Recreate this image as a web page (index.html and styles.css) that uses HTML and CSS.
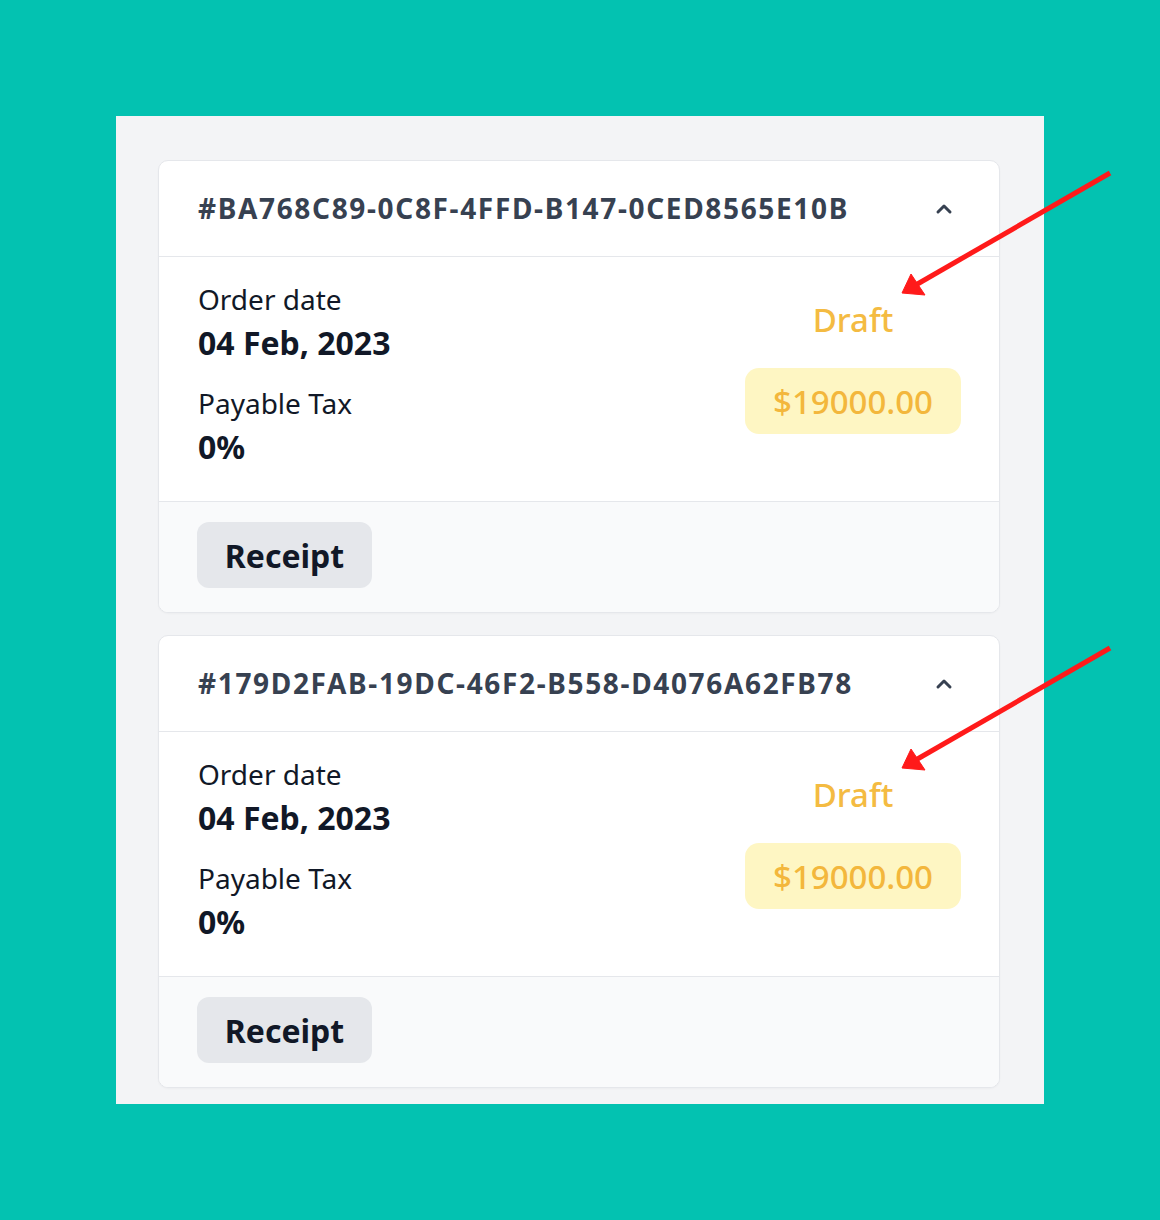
FILE: index.html
```html
<!DOCTYPE html>
<html lang="en">
<head>
<meta charset="utf-8">
<title>Orders</title>
<link rel="stylesheet" href="styles.css">
</head>
<body>
<div class="stage">
  <div class="panel">
    <div class="card">
      <div class="card-header">
        <span class="order-id">#BA768C89-0C8F-4FFD-B147-0CED8565E10B</span>
        <svg class="chevron" width="18" height="14" viewBox="0 0 18 14"><polyline points="3,11 9,5 15,11" fill="none" stroke="#374151" stroke-width="3" stroke-linecap="round" stroke-linejoin="round"/></svg>
      </div>
      <div class="card-body">
        <div class="info">
          <div class="label">Order date</div>
          <div class="value">04 Feb, 2023</div>
          <div class="label gap">Payable Tax</div>
          <div class="value">0%</div>
        </div>
        <div class="status">
          <div class="status-text">Draft</div>
          <div class="amount">$19000.00</div>
        </div>
      </div>
      <div class="card-footer">
        <button class="receipt">Receipt</button>
      </div>
    </div>
    <div class="card">
      <div class="card-header">
        <span class="order-id">#179D2FAB-19DC-46F2-B558-D4076A62FB78</span>
        <svg class="chevron" width="18" height="14" viewBox="0 0 18 14"><polyline points="3,11 9,5 15,11" fill="none" stroke="#374151" stroke-width="3" stroke-linecap="round" stroke-linejoin="round"/></svg>
      </div>
      <div class="card-body">
        <div class="info">
          <div class="label">Order date</div>
          <div class="value">04 Feb, 2023</div>
          <div class="label gap">Payable Tax</div>
          <div class="value">0%</div>
        </div>
        <div class="status">
          <div class="status-text">Draft</div>
          <div class="amount">$19000.00</div>
        </div>
      </div>
      <div class="card-footer">
        <button class="receipt">Receipt</button>
      </div>
    </div>
  </div>
  <svg class="arrows" width="1160" height="1220" viewBox="0 0 1160 1220">
    <g fill="#ff1a1a" stroke="#ff1a1a">
      <line x1="1110" y1="173" x2="914" y2="286" stroke-width="5"/>
      <polygon points="911,274 902,293 925,295" stroke-width="1" stroke-linejoin="round"/>
      <line x1="1110" y1="648" x2="914" y2="761" stroke-width="5"/>
      <polygon points="911,749 902,768 925,770" stroke-width="1" stroke-linejoin="round"/>
    </g>
  </svg>
</div>
</body>
</html>
```

FILE: styles.css
```css
* { box-sizing: border-box; }
html, body { margin: 0; padding: 0; }
body {
  background: #03c2b1;
  font-family: "Noto Sans", "Open Sans", sans-serif;
  width: 1160px;
  height: 1220px;
  overflow: hidden;
}
.stage {
  position: relative;
  width: 1160px;
  height: 1220px;
  padding: 116px 0 0 116px;
}
.panel {
  width: 928px;
  height: 988px;
  background: #f3f4f6;
  padding: 44px 44px 16px 42px;
  display: flex;
  flex-direction: column;
  gap: 22px;
}
.card {
  background: #fff;
  border: 1px solid #e5e7eb;
  border-radius: 10px;
  overflow: hidden;
  box-shadow: 0 1px 2px rgba(0,0,0,0.03);
}
.card-header {
  display: flex;
  align-items: center;
  justify-content: space-between;
  padding: 29px 46px 30px 39px;
  border-bottom: 1px solid #e5e7eb;
}
.order-id {
  font-size: 28px;
  line-height: 36px;
  font-weight: 700;
  color: #374151;
  letter-spacing: 1.65px;
}
.chevron { display: block; }
.card-body {
  display: flex;
  justify-content: space-between;
  align-items: flex-start;
  padding: 24px 38px 28px 39px;
}
.label {
  font-size: 28px;
  line-height: 36px;
  color: #111827;
}
.label.gap { margin-top: 16px; }
.value {
  font-size: 32px;
  line-height: 52px;
  font-weight: 700;
  color: #111827;
}
.status {
  display: flex;
  flex-direction: column;
  align-items: center;
  margin-top: 19px;
}
.status-text {
  font-size: 33px;
  line-height: 40px;
  font-weight: 500;
  color: #f4bb42;
}
.amount {
  margin-top: 28px;
  width: 216px;
  height: 66px;
  display: flex;
  align-items: center;
  justify-content: center;
  background: #fef6c3;
  border-radius: 14px;
  font-size: 33px;
  font-weight: 500;
  color: #f3b73c;
}
.card-footer {
  background: #f9fafb;
  border-top: 1px solid #e5e7eb;
  padding: 20px 39px 24px 38px;
}
.receipt {
  display: block;
  width: 175px;
  height: 66px;
  border: none;
  border-radius: 12px;
  background: #e5e7eb;
  font-family: "Noto Sans", "Open Sans", sans-serif;
  font-size: 32px;
  font-weight: 700;
  color: #111827;
  padding: 0;
}
.arrows {
  position: absolute;
  left: 0;
  top: 0;
  pointer-events: none;
}
```
